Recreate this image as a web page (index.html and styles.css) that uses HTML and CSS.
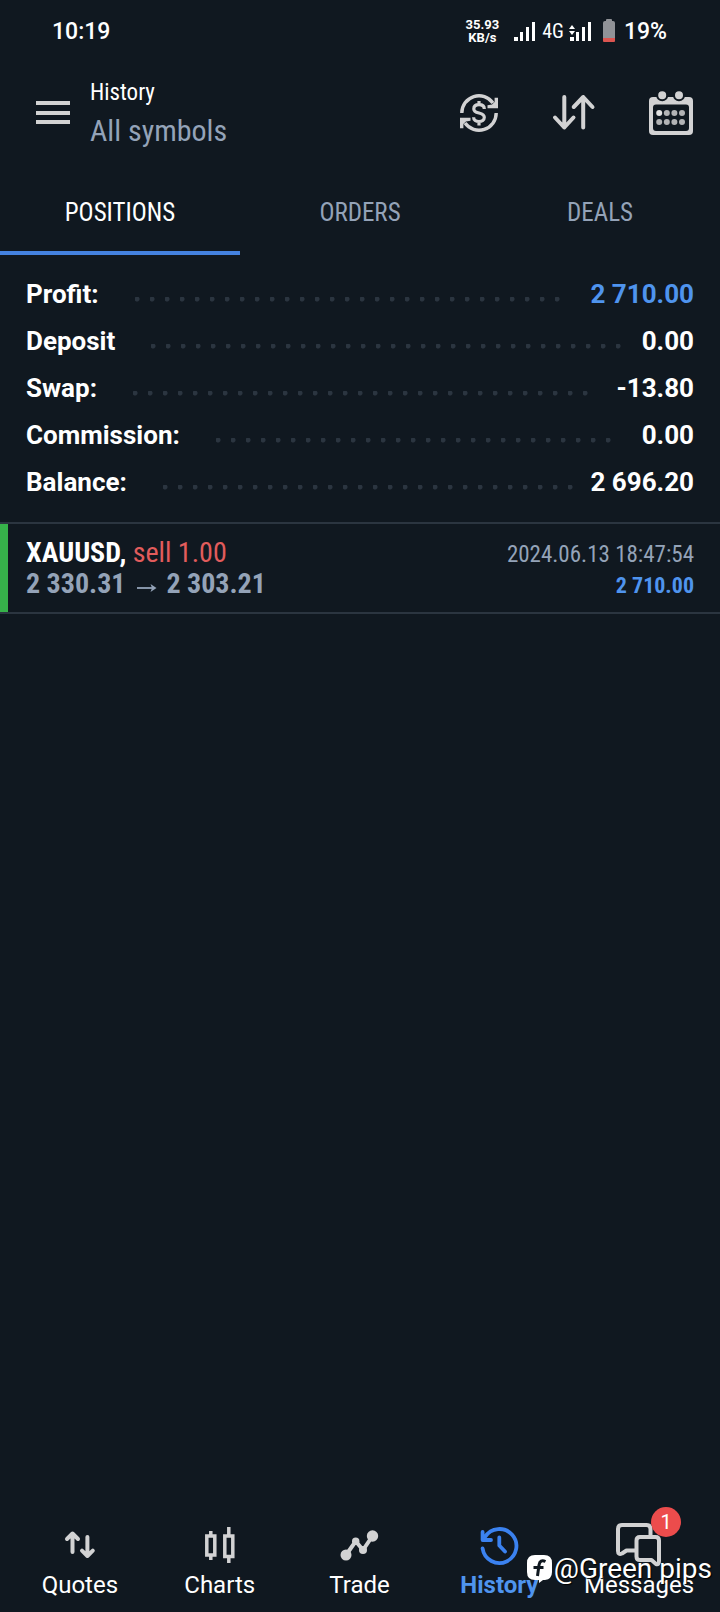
FILE: index.html
```html
<!DOCTYPE html>
<html lang="en">
<head>
<meta charset="utf-8">
<meta name="viewport" content="width=device-width, initial-scale=1">
<title>History</title>
<link rel="stylesheet" href="styles.css">
</head>
<body>
<div class="app">
  <div class="status">
    <span class="clock">10:19</span>
    <div class="status-right">
      <span class="net-speed">35.93<br>KB/s</span>
      <svg class="signal" width="22" height="20" viewBox="0 0 22 20" fill="#fff"><path d="M0 16h4v4H0zM6 11h3v9H6zM12 6h3v14h-3zM18 1h3v19h-3z"/></svg>
      <span class="net-type">4G</span>
      <svg class="signal-data" width="22" height="20" viewBox="0 0 22 20" fill="#fff"><path d="M0 16h4v4H0zM6 11h3v9H6zM12 6h3v14h-3zM18 1h3v19h-3zM-1 8l3-4 3 4zM-1 10h6l-3 4z"/></svg>
      <svg class="battery" width="12" height="24" viewBox="0 0 12 24"><path d="M3 2V1q0-1 1-1h4q1 0 1 1v1h1q2 0 2 2v15H0V4q0-2 2-2z" fill="#909297"/><path d="M0 19h12v3q0 1-1 1H1q-1 0-1-1z" fill="#dc5550"/></svg>
      <span class="percent">19%</span>
    </div>
  </div>

  <header class="header">
    <button class="icon-btn menu" aria-label="Menu"><svg width="34" height="24" viewBox="0 0 34 24" fill="#d2d2d3"><path d="M0 0h34v4H0zM0 10h34v4H0zM0 19h34v4H0z"/></svg></button>
    <div class="titles">
      <h1 class="title">History</h1>
      <p class="subtitle">All symbols</p>
    </div>
    <div class="actions">
      <button class="icon-btn" aria-label="Currency"><svg width="40" height="40" viewBox="0 0 40 40" fill="none" stroke="#d2d2d3" stroke-width="3.4"><path d="M2.8 20A17.2 17.2 0 0 1 34 10M37.2 20A17.2 17.2 0 0 1 6 30"/><path d="M39 4.700V15.300H28.500V12.300L33 11.500 35.600 9V4.700zM1 35.300V24.700H11.500V27.700L7 28.500 4.400 31V35.300z" fill="#d2d2d3" stroke="none"/><path d="M25.300 16C25.300 13 23 11.700 20 11.700S14.800 13.200 14.800 15.900C14.800 21.500 25.300 18.500 25.300 24.300 25.300 27 23 28.500 20 28.500S14.600 27 14.600 24.300M20 8v4M20 28v4.500" stroke-width="3.200"/></svg></button>
      <button class="icon-btn" aria-label="Sort"><svg width="42" height="35" viewBox="0 0 42 35" fill="none" stroke="#d2d2d3" stroke-width="4" stroke-linecap="round" stroke-linejoin="round"><path d="M11.300 2V32.500M2 22.500L11.300 32.500 20.500 22.500M30.200 32.500V2M20.700 12L30.200 2 39.500 12"/></svg></button>
      <button class="icon-btn" aria-label="Calendar"><svg width="44" height="44" viewBox="0 0 44 44"><rect y="6" width="44" height="38" rx="4" fill="#d2d2d3"/><rect x="4" y="13.500" width="36" height="26.500" rx="3" fill="#101820"/><g fill="#d2d2d3" stroke="#101820" stroke-width="2"><circle cx="13.200" cy="4.200" r="5"/><circle cx="30" cy="4.200" r="5"/></g><g fill="#b2b3b5"><circle cx="10.200" cy="22" r="3" fill="#e2e2e2"/><circle cx="17.800" cy="22" r="3"/><circle cx="25.400" cy="22" r="3"/><circle cx="33" cy="22" r="3"/><circle cx="10.200" cy="31" r="3"/><circle cx="17.800" cy="31" r="3"/><circle cx="25.400" cy="31" r="3"/><circle cx="33" cy="31" r="3"/></g></svg></button>
    </div>
  </header>

  <div class="tabs" role="tablist">
    <button class="tab active" role="tab" aria-selected="true">POSITIONS</button>
    <button class="tab" role="tab" aria-selected="false">ORDERS</button>
    <button class="tab" role="tab" aria-selected="false">DEALS</button>
  </div>

  <main class="content">
    <dl class="summary">
      <div class="row"><dt>Profit:</dt><dd class="leader"><i></i></dd><dd class="blue">2 710.00</dd></div>
      <div class="row"><dt>Deposit</dt><dd class="leader"><i></i></dd><dd>0.00</dd></div>
      <div class="row"><dt>Swap:</dt><dd class="leader"><i></i></dd><dd>-13.80</dd></div>
      <div class="row"><dt>Commission:</dt><dd class="leader"><i></i></dd><dd>0.00</dd></div>
      <div class="row"><dt>Balance:</dt><dd class="leader"><i></i></dd><dd>2 696.20</dd></div>
    </dl>
    <article class="deal">
      <div class="deal-line"><span class="symbol"><b>XAUUSD,</b> <span class="sell">sell 1.00</span></span><time class="date">2024.06.13 18:47:54</time></div>
      <div class="deal-line"><span class="prices">2 330.31 <svg width="20" height="10" viewBox="0 0 20 10" fill="none" stroke="#94a3b8" stroke-width="1.800" role="img" aria-label="to"><path d="M0 5h17"/><path d="M13.500 1L19.500 5 13.500 9 15 5z" fill="#94a3b8" stroke="none"/></svg> 2 303.21</span><span class="result">2 710.00</span></div>
    </article>
  </main>

  <nav class="nav">
    <a class="nav-item" href="#quotes"><span class="nav-icon"><svg width="30" height="28" viewBox="0 0 30 28" fill="none" stroke="#d2d2d3" stroke-width="4" stroke-linecap="round" stroke-linejoin="round"><path d="M7.500 21V2.500M2 8L7.500 2.500 13 8M22.400 6V25M17 19.600L22.400 25 27.800 19.600"/></svg></span>Quotes</a>
    <a class="nav-item" href="#charts"><span class="nav-icon"><svg width="30" height="36" viewBox="0 0 30 36" fill="none" stroke="#d2d2d3" stroke-width="3.500"><path d="M1.800 9h8v19h-8zM19.800 9h8v20.500h-8zM5.800 4v5M5.800 28v5M23.800 0v9M23.800 29.500V36"/></svg></span>Charts</a>
    <a class="nav-item" href="#trade"><span class="nav-icon"><svg width="39" height="31" viewBox="0 0 39 31" fill="#d2d2d3"><path d="M6 25L15.700 11.300 23 20 32.500 6" fill="none" stroke="#d2d2d3" stroke-width="4"/><circle cx="6" cy="25" r="5.500"/><circle cx="15.700" cy="11.300" r="3.700"/><circle cx="23" cy="20" r="4"/><circle cx="32.500" cy="6" r="5.700"/></svg></span>Trade</a>
    <a class="nav-item current" href="#history" aria-current="page"><span class="nav-icon"><svg width="39" height="39" viewBox="0 0 39 39" fill="none" stroke="#3b82f0" stroke-width="3.800" stroke-linecap="round" stroke-linejoin="round"><path d="M2.600 22.500A17 17 0 1 0 5 11M2.600 6V14H11M19.300 11.500V19.500L25 25.500"/></svg></span>History</a>
    <a class="nav-item" href="#messages"><span class="nav-icon"><svg width="46" height="44" viewBox="0 0 46 44" fill="none" stroke="#d2d2d3" stroke-width="4" stroke-linejoin="round"><path d="M20 27.500H10.500L6 30.500Q2 32 2 28V6Q2 2 6 2H30.500Q34.500 2 34.500 6V13"/><path d="M24 14H39.500Q43 14 43 17.500V38Q43 42 40 41L35.500 37H24Q20.500 37 20.500 33.500V17.500Q20.500 14 24 14z"/></svg><span class="badge">1</span></span>Messages</a>
  </nav>

  <div class="watermark">
    <svg width="25" height="28" viewBox="0 0 25 28"><path d="M8 0h9q8 0 8 8v9q0 7-7 8h-2l-4 3v-3H8q-8 0-8-8V8q0-8 8-8z" fill="#fff"/><path d="M18.500 6.500Q13 4 12 10L10.500 21M6.500 12.500H16.500" fill="none" stroke="#101820" stroke-width="3"/></svg>
    <span>@Green pips</span>
  </div>
</div>
</body>
</html>
```

FILE: styles.css
```css
* { box-sizing: border-box; }
body {
  margin: 0;
  background: #101820;
  color: #fff;
  font-family: Roboto, "Liberation Sans", sans-serif;
}
h1, p, dl, dd { margin: 0; }
button {
  padding: 0;
  border: 0;
  background: none;
  color: inherit;
  font: inherit;
  cursor: pointer;
}
svg { display: block; overflow: visible; }

.app {
  position: relative;
  display: flex;
  flex-direction: column;
  min-height: 100vh;
}

/* status bar */
.status {
  display: flex;
  justify-content: space-between;
  align-items: center;
  height: 62px;
  padding: 0 53px 0 52px;
  font-size: 23px;
  font-weight: 500;
}
.status-right { display: flex; align-items: center; }
.net-speed {
  margin-right: 15px;
  font-size: 13px;
  line-height: 13px;
  font-weight: 700;
  text-align: center;
}
.net-type {
  margin: 0 6px;
  font-family: "Roboto Condensed", Roboto, sans-serif;
  font-size: 20px;
  font-weight: 400;
}
.battery { margin: 0 9px 0 11px; }

/* header */
.header {
  display: flex;
  align-items: center;
  height: 101px;
  padding: 0 27px 0 36px;
  font-family: "Roboto Condensed", Roboto, sans-serif;
}
.menu { margin-right: 20px; }
.title { font-size: 23px; line-height: 36px; font-weight: 400; }
.subtitle { font-size: 30px; line-height: 40px; color: #94a3b8; }
.actions {
  display: flex;
  align-items: center;
  gap: 54px;
  margin-left: auto;
}

/* tabs */
.tabs {
  display: grid;
  grid-template-columns: repeat(3, 1fr);
  height: 92px;
  font-family: "Roboto Condensed", Roboto, sans-serif;
}
.tab {
  padding-top: 10px;
  border-bottom: 4px solid transparent;
  color: #94a3b8;
  font-size: 25px;
}
.tab.active { border-color: #4482e0; color: #fff; }

/* totals */
.content { flex: 1; }
.summary { padding: 15px 26px 17px; }
.row {
  display: flex;
  height: 47px;
  line-height: 48px;
  font-size: 26px;
  font-weight: 700;
}
.blue { color: #4f94ee; }
.leader { flex: 1; margin: 27px 6px 0 36px; }
.leader i {
  display: block;
  width: round(down, 100%, 15px);
  height: 5px;
  background: radial-gradient(circle at 2px 2px, #2b3540 2px, transparent 3px) 0 0 / 15px 5px repeat-x;
}

/* closed deal */
.deal {
  padding: 13px 26px;
  border-top: 2px solid #2b3540;
  border-bottom: 2px solid #2b3540;
  background: linear-gradient(#36b24a, #36b24a) 0 0 / 8px 100% no-repeat;
  font-family: "Roboto Condensed", Roboto, sans-serif;
}
.deal-line {
  display: flex;
  justify-content: space-between;
  align-items: baseline;
  height: 31px;
  line-height: 32px;
  font-size: 28px;
}
.sell { color: #e25c5c; }
.prices { color: #94a3b8; font-weight: 700; }
.prices svg { display: inline-block; margin: 0 3px 0 5px; }
.date { color: #94a3b8; font-size: 23px; }
.result { color: #4f94ee; font-size: 22px; font-weight: 700; }

/* bottom navigation */
.nav {
  display: grid;
  grid-template-columns: repeat(5, 1fr);
  padding: 0 11px 11px 10px;
}
.nav-item {
  display: flex;
  flex-direction: column;
  align-items: center;
  color: #fff;
  font-size: 24px;
  line-height: 32px;
  text-decoration: none;
}
.nav-item.current { color: #4f94ee; font-weight: 700; }
.nav-icon {
  position: relative;
  display: flex;
  justify-content: center;
  align-items: center;
  height: 48px;
}
.badge {
  position: absolute;
  top: -14px;
  right: -19px;
  width: 30px;
  height: 30px;
  border-radius: 50%;
  background: #ec4c4c;
  font-size: 20px;
  line-height: 30px;
  text-align: center;
}

.watermark {
  position: absolute;
  right: 8px;
  bottom: 26px;
  display: flex;
  align-items: center;
  gap: 2px;
  font-size: 28px;
  line-height: 34px;
  text-shadow: 1px 1px 1px #000;
  pointer-events: none;
}
```
